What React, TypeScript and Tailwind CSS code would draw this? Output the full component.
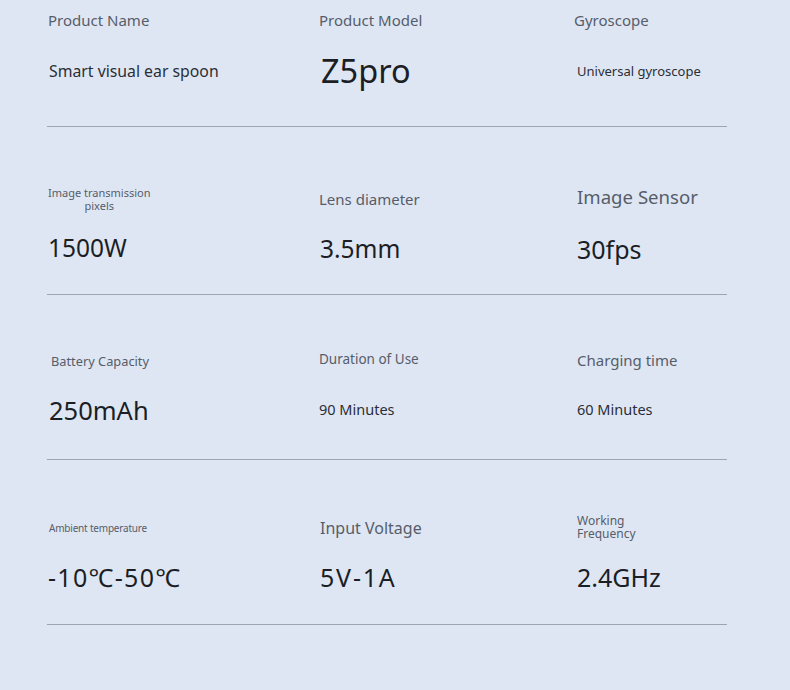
import React from "react";

type Cell = {
  label: React.ReactNode;
  labelClass: string;
  value: React.ReactNode;
  valueClass: string;
};

type Row = { pt: string; pb: string; cells: Cell[] };

const rows: Row[] = [
  {
    pt: "pt-0",
    pb: "h-[127px]",
    cells: [
      { label: "Product Name", labelClass: "text-[15px]", value: "Smart visual ear spoon", valueClass: "text-[15.8px] text-[#2a2e36] pl-[1px] mt-[1px]" },
      { label: "Product Model", labelClass: "text-[15px]", value: "Z5pro", valueClass: "text-[32.5px] pl-[2px]" },
      { label: "Gyroscope", labelClass: "text-[15px] -ml-[3px]", value: "Universal gyroscope", valueClass: "text-[13px] text-[#2a2e36]" },
    ],
  },
  {
    pt: "pt-[51px]",
    pb: "h-[168px]",
    cells: [
      {
        label: (
          <span className="inline-flex flex-col items-center leading-[13px] whitespace-nowrap">
            <span>Image transmission</span>
            <span>pixels</span>
          </span>
        ),
        labelClass: "text-[11px] mt-[2px]",
        value: "1500W",
        valueClass: "text-[24.5px] -mt-[2px]",
      },
      { label: "Lens diameter", labelClass: "text-[15px] mt-[2px]", value: "3.5mm", valueClass: "text-[24.5px] pl-[1px]" },
      { label: "Image Sensor", labelClass: "text-[18.6px] -mt-[2px]", value: "30fps", valueClass: "text-[25px]" },
    ],
  },
  {
    pt: "pt-[45px]",
    pb: "h-[165px]",
    cells: [
      { label: "Battery Capacity", labelClass: "text-[12.8px] pl-[3px] mt-[2px]", value: "250mAh", valueClass: "text-[25.5px] pl-[1px]" },
      { label: "Duration of Use", labelClass: "text-[13.5px] -mt-[1px]", value: "90 Minutes", valueClass: "text-[14.5px] text-[#2a2e36] -mt-[4px]" },
      { label: "Charging time", labelClass: "text-[15px]", value: "60 Minutes", valueClass: "text-[14.5px] text-[#2a2e36] -mt-[4px]" },
    ],
  },
  {
    pt: "pt-[47px]",
    pb: "h-[165px]",
    cells: [
      { label: "Ambient temperature", labelClass: "text-[10px] pl-[1px] tracking-[-0.2px] mt-[2px]", value: "-10℃-50℃", valueClass: "text-[25px] tracking-[1.3px] -mt-[2px]" },
      { label: "Input Voltage", labelClass: "text-[16px] pl-[1px] mt-[1px]", value: "5V-1A", valueClass: "text-[25px] tracking-[1.8px] pl-[1px] -mt-[2px]" },
      {
        label: (
          <span className="flex flex-col leading-[13px]">
            <span>Working</span>
            <span>Frequency</span>
          </span>
        ),
        labelClass: "text-[12px]",
        value: "2.4GHz",
        valueClass: "text-[25px] -mt-[2px]",
      },
    ],
  },
];

export default function App() {
  return (
    <div
      className="w-[790px] h-[690px] bg-[#dfe6f3] overflow-hidden"
      style={{ fontFamily: '"Noto Sans", "Open Sans", sans-serif' }}
    >
      <div className="ml-[47px] w-[680px]">
        {rows.map((row, i) => (
          <div
            key={i}
            className={`${row.pt} ${row.pb} border-b border-[#9ea4b0] grid grid-cols-[271px_258px_151px]`}
          >
            {row.cells.map((c, j) => (
              <div key={j} className="flex flex-col pl-[1px]">
                <div className="h-[40px] flex items-center">
                  <div className={`text-[#565d6a] leading-tight ${c.labelClass}`}>{c.label}</div>
                </div>
                <div className="h-[11px]" />
                <div className="h-[40px] flex items-center">
                  <div className={`text-[#1b1e25] leading-none whitespace-nowrap ${c.valueClass}`}>{c.value}</div>
                </div>
              </div>
            ))}
          </div>
        ))}
      </div>
    </div>
  );
}
